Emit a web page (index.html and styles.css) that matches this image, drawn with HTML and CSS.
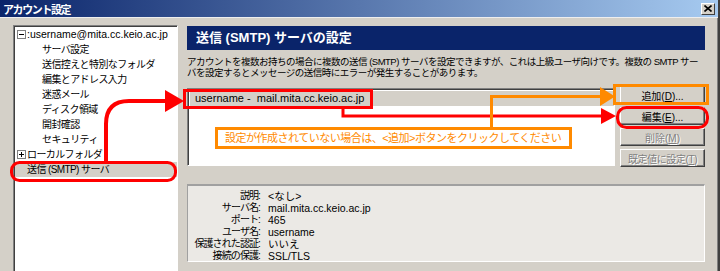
FILE: index.html
```html
<!DOCTYPE html>
<html lang="ja">
<head>
    <meta charset="UTF-8">
    <title>アカウント設定</title>
    <link rel="stylesheet" href="styles.css">
</head>
<body>
    <div class="window">
        <div class="titlebar">
            <span class="title">アカウント設定</span>
            <span class="close">
                <svg width="8" height="7" viewBox="0 0 8 7"><path d="M0.5 0.5 L7.5 6.5 M7.5 0.5 L0.5 6.5" stroke="#000" stroke-width="1.6"/></svg>
            </span>
        </div>

        <div class="content">
            <div class="tree">
                <div class="node root"><span class="toggle minus"></span><span class="latin">:username@mita.cc.keio.ac.jp</span></div>
                <div class="node child">サーバ設定</div>
                <div class="node child">送信控えと特別なフォルダ</div>
                <div class="node child">編集とアドレス入力</div>
                <div class="node child">迷惑メール</div>
                <div class="node child">ディスク領域</div>
                <div class="node child">開封確認</div>
                <div class="node child">セキュリティ</div>
                <div class="node root"><span class="toggle plus"></span>ローカルフォルダ</div>
                <div class="node top selected">送信 (SMTP) サーバ</div>
            </div>

            <div class="main">
                <h1 class="page-title">送信 (SMTP) サーバの設定</h1>
                <p class="intro">アカウントを複数お持ちの場合に複数の送信 (SMTP) サーバを設定できますが、これは上級ユーザ向けです。複数の SMTP サー<br>バを設定するとメッセージの送信時にエラーが発生することがあります。</p>

                <div class="servers">
                    <div class="server-list">
                        <div class="server-row">username -&nbsp; mail.mita.cc.keio.ac.jp</div>
                    </div>
                    <div class="buttons">
                        <button class="btn">追加(<u>D</u>)...</button>
                        <button class="btn">編集(<u>E</u>)...</button>
                        <button class="btn" disabled>削除(<u>M</u>)</button>
                        <button class="btn wide" disabled>既定値に設定(<u>T</u>)</button>
                    </div>
                </div>

                <div class="details">
                    <span class="label">説明:</span><span class="value">&lt;なし&gt;</span>
                    <span class="label">サーバ名:</span><span class="value">mail.mita.cc.keio.ac.jp</span>
                    <span class="label">ポート:</span><span class="value">465</span>
                    <span class="label">ユーザ名:</span><span class="value">username</span>
                    <span class="label">保護された認証:</span><span class="value">いいえ</span>
                    <span class="label">接続の保護:</span><span class="value">SSL/TLS</span>
                </div>
            </div>
        </div>

        <!-- annotations drawn over the dialog -->
        <svg class="marks" width="720" height="271" viewBox="0 0 720 271">
            <g fill="none" stroke="#ff0000" stroke-width="3">
                <rect x="11.5" y="162.5" width="164" height="18" rx="8"/>
                <rect x="184.5" y="90.5" width="187" height="17"/>
                <rect x="617.5" y="107.5" width="90" height="20" rx="9"/>
                <path d="M343 108 V116 H604"/>
                <path d="M106 163 V124 Q106 101 129 101 H168" stroke-width="4"/>
            </g>
            <g fill="#ff0000">
                <polygon points="601,108 616,116 601,124"/>
                <polygon points="165,90 184,101 165,112"/>
            </g>
            <g fill="none" stroke="#ff8a00" stroke-width="3">
                <rect x="614.5" y="85.5" width="93" height="18"/>
                <path d="M491.5 127 V96.5 H603"/>
            </g>
            <polygon points="600,87 615,96.5 600,106" fill="#ff8a00"/>
        </svg>
        <div class="callout">設定が作成されていない場合は、&lt;追加&gt;ボタンをクリックしてください</div>
    </div>
</body>
</html>
```

FILE: styles.css
```css
body {
    margin: 0;
    padding: 0;
    font-family: "Liberation Sans", "Noto Sans CJK JP", sans-serif;
    font-size: 11px;
    color: #000;
    background-color: #d4d0c8;
}

.window {
    position: relative;
    width: 718px;
    height: 271px;
    overflow: hidden;
    background-color: #d4d0c8;
    border-right: 2px solid #404040;
    box-shadow: inset -1px 0 0 #808080;
}

.titlebar {
    height: 18px;
    display: flex;
    align-items: center;
    justify-content: space-between;
    padding: 0 3px;
    background: linear-gradient(to right, #0a246a, #a6caf0);
    border-bottom: 1px solid #eeeeee;
    box-sizing: border-box;
}

.title {
    color: white;
    font-weight: bold;
    font-size: 11px;
    letter-spacing: -1.4px;
}

.close {
    width: 14px;
    height: 12px;
    display: flex;
    align-items: center;
    justify-content: center;
    background-color: #d4d0c8;
    border: 1px solid;
    border-color: #fff #404040 #404040 #fff;
    box-sizing: border-box;
}

.content {
    display: flex;
    padding: 7px 13px 0 13px;
}

/* tree */

.tree {
    width: 165px;
    height: 250px;
    flex: none;
    box-sizing: border-box;
    padding-top: 0;
    background-color: white;
    border: 1px solid;
    border-color: #808080 #fff #fff #808080;
    box-shadow: inset 1px 1px 0 #404040;
    padding-left: 1px;
    padding-top: 1px;
}

.node {
    height: 15px;
    line-height: 15px;
    display: flex;
    align-items: center;
    font-size: 10px;
    letter-spacing: -0.6px;
    white-space: nowrap;
}

.node.root {
    padding-left: 2px;
}

.node.child {
    padding-left: 27px;
}

.node.top {
    padding-left: 12px;
}

.node.selected {
    background-color: #d4d0c8;
}

.latin {
    font-size: 10.5px;
    letter-spacing: 0;
}

.toggle {
    position: relative;
    width: 9px;
    height: 9px;
    margin-right: 1px;
    box-sizing: border-box;
    border: 1px solid #808080;
    background-color: white;
    flex: none;
}

.toggle::before {
    content: "";
    position: absolute;
    left: 1px;
    top: 3px;
    width: 5px;
    height: 1px;
    background-color: #000;
}

.toggle.plus::after {
    content: "";
    position: absolute;
    left: 3px;
    top: 1px;
    width: 1px;
    height: 5px;
    background-color: #000;
}

/* right side */

.main {
    margin-left: 9px;
    width: 518px;
}

.page-title {
    margin: 1px 0 0 0;
    height: 24px;
    line-height: 24px;
    padding-left: 9px;
    background-color: #0a246a;
    color: white;
    font-size: 13px;
    font-weight: bold;
}

.intro {
    margin: 6px 0 0 0;
    font-size: 9.5px;
    line-height: 11px;
    letter-spacing: -0.5px;
    white-space: nowrap;
}

.servers {
    display: flex;
    margin-top: 10px;
}

.server-list {
    width: 428px;
    height: 78px;
    box-sizing: border-box;
    margin-top: 0;
    background-color: white;
    border: 1px solid;
    border-color: #808080 #fff #fff #808080;
    box-shadow: inset 1px 1px 0 #404040;
    padding: 2px 0 0 2px;
}

.server-row {
    height: 15px;
    line-height: 15px;
    padding-left: 5px;
    background-color: #d4d0c8;
    white-space: pre;
}

.buttons {
    margin-left: 5px;
    margin-top: -2px;
    display: flex;
    flex-direction: column;
    gap: 3px;
}

.btn {
    width: 85px;
    height: 18px;
    padding: 0;
    font-family: inherit;
    font-size: 10px;
    color: #000;
    background-color: #d4d0c8;
    border: 1px solid;
    border-color: #fff #404040 #404040 #fff;
    box-shadow: inset -1px -1px 0 #808080;
}

.btn:disabled {
    color: #808080;
    text-shadow: 1px 1px 0 #fff;
}

.btn.wide {
    letter-spacing: -0.4px;
}

.details {
    margin-top: 17px;
    height: 78px;
    box-sizing: border-box;
    display: grid;
    grid-template-columns: 72px auto;
    column-gap: 8px;
    align-content: start;
    padding-top: 4px;
    background-color: #ebe9e5;
    border: 1px solid;
    border-color: #a0a0a0 #fff #fff #a0a0a0;
    border-top-width: 2px;
    font-size: 10.5px;
    line-height: 12px;
}

.label {
    text-align: right;
    font-size: 10px;
    letter-spacing: -0.9px;
}

/* annotation overlay */

.marks {
    position: absolute;
    left: 0;
    top: 0;
    pointer-events: none;
}

.callout {
    position: absolute;
    left: 215px;
    top: 127px;
    width: 357px;
    height: 22px;
    box-sizing: border-box;
    border: 3px solid #ff8a00;
    background-color: white;
    color: #ff8a00;
    font-size: 11px;
    line-height: 16px;
    letter-spacing: -0.5px;
    padding-left: 7px;
    white-space: nowrap;
}
```
